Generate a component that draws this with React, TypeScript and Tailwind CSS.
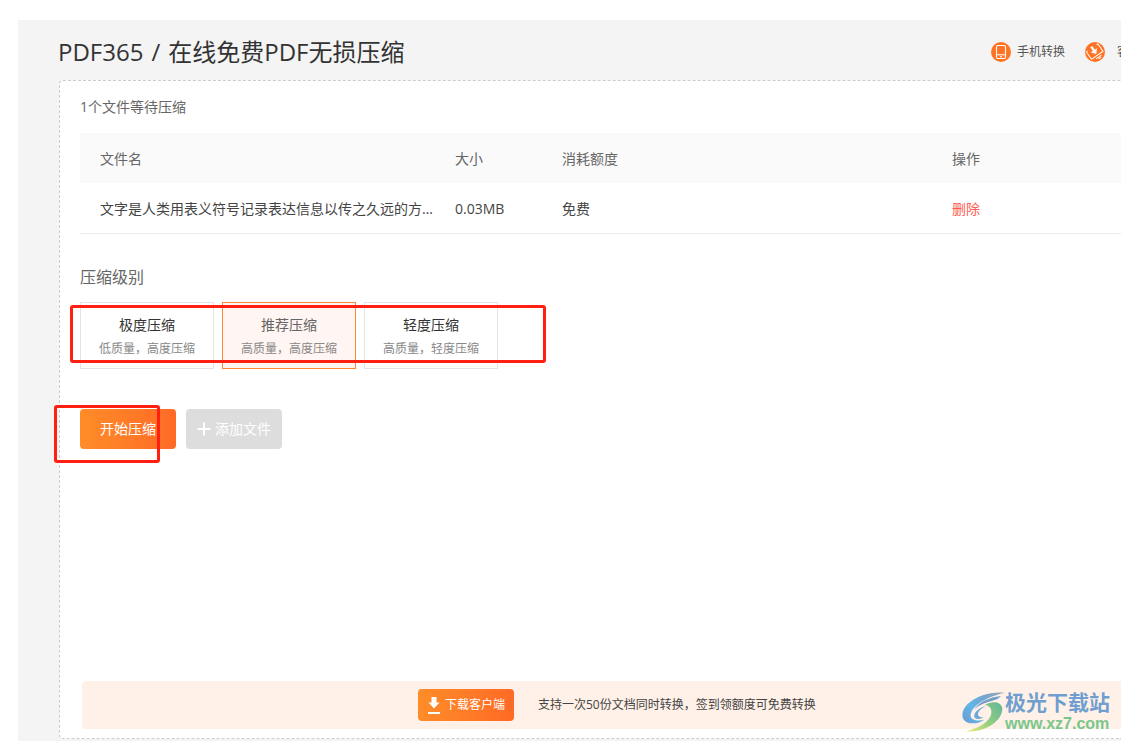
import React from "react";

const levels = [
  { name: "极度压缩", note: "低质量，高度压缩", active: false },
  { name: "推荐压缩", note: "高质量，高度压缩", active: true },
  { name: "轻度压缩", note: "高质量，轻度压缩", active: false },
];

function PhoneIcon() {
  return (
    <svg className="size-5 shrink-0" viewBox="0 0 20 20" fill="none" aria-hidden="true">
      <circle cx="10" cy="10" r="10" fill="#ff7324" />
      <rect x="5.5" y="3.5" width="9" height="13" rx="1.5" stroke="#fff" strokeWidth="1.1" />
      <path d="M5.5 12.8h9M9 14.7h2" stroke="#fff" strokeWidth="1.1" />
    </svg>
  );
}

function ClientIcon() {
  return (
    <svg className="size-5 shrink-0" viewBox="0 0 20 20" fill="none" aria-hidden="true">
      <circle cx="10" cy="10" r="10" fill="#ff7324" />
      <g transform="rotate(-35 10 10)">
        <path d="M4.500 5H3v9h14V5h-1.500M7 16.300h6.500M9 17.800h3" stroke="#fff" strokeWidth="1" />
        <path d="M8.900 3.500h2.200v4.500h2.700L10 12.300 6.200 8h2.700z" fill="#fff" />
      </g>
    </svg>
  );
}

function SwirlLogo() {
  return (
    <svg className="h-10 w-[43px] shrink-0" viewBox="19 19 129 120" fill="none" aria-hidden="true">
      <defs>
        <linearGradient id="swirlBlue" x1="140" y1="20" x2="30" y2="110" gradientUnits="userSpaceOnUse">
          <stop stopColor="#9aa5b1" />
          <stop offset="0.4" stopColor="#6fa8d4" />
          <stop offset="0.7" stopColor="#62b6e6" />
          <stop offset="1" stopColor="#6a9fd6" />
        </linearGradient>
        <linearGradient id="swirlGreen" x1="138" y1="60" x2="35" y2="138" gradientUnits="userSpaceOnUse">
          <stop stopColor="#68b795" />
          <stop offset="0.5" stopColor="#94d080" />
          <stop offset="1" stopColor="#f2e86c" />
        </linearGradient>
      </defs>
      <path
        d="M147 21C108 17 62 29 35 56C14 78 15 106 40 112C56 115 74 111 86 102C66 107 46 104 45 90C45 66 78 38 147 21Z"
        fill="url(#swirlBlue)"
      />
      <path d="M136 31C100 35 70 49 55 72C76 53 95 50 108 46C121 43 131 38 136 31Z" fill="#719fca" />
      <path d="M91 62C70 65 53 82 56 94C60 103 76 101 84 94C75 96 67 93 67 86C67 77 78 67 91 62Z" fill="#6fa9db" />
      <path
        d="M88 57C109 45 137 47 140 68C141 101 96 141 29 137C71 129 106 106 107 80C108 67 100 60 88 57Z"
        fill="url(#swirlGreen)"
      />
    </svg>
  );
}

export default function App() {
  return (
    <div className="min-h-screen overflow-hidden bg-white pt-5 pl-[18px] font-['Open_Sans','Noto_Sans_CJK_SC',sans-serif] text-sm text-[#666]">
      <main className="flex min-h-[calc(100vh-20px)] flex-col bg-[#f4f4f4] pb-0.5 pl-10">
        <header className="flex h-[60px] items-center justify-between overflow-hidden pt-1">
          <h1 className="flex gap-2 text-2xl whitespace-nowrap text-[#333]">
            <span>PDF365</span>
            <span>/</span>
            <span>在线免费PDF无损压缩</span>
          </h1>
          <nav className="-mr-8 flex shrink-0 gap-5 text-xs text-[#555]">
            <a href="#phone" className="flex items-center gap-1.5"><PhoneIcon />手机转换</a>
            <a href="#client" className="flex items-center gap-3"><ClientIcon />客户端</a>
          </nav>
        </header>

        <section className="relative ml-px flex flex-1 flex-col rounded-l border border-r-0 border-dashed border-[#ccc] bg-white pt-4 pb-[9px] pl-5">
          <p className="leading-5">1个文件等待压缩</p>

          <table className="mt-4 w-full table-fixed border-collapse text-left">
            <thead>
              <tr className="h-[50px] bg-[#fafafa]">
                <th className="w-[375px] pt-0.5 pl-5 font-normal">文件名</th>
                <th className="w-[107px] pt-0.5 font-normal">大小</th>
                <th className="w-[390px] pt-0.5 font-normal">消耗额度</th>
                <th className="pt-0.5 font-normal">操作</th>
              </tr>
            </thead>
            <tbody>
              <tr className="h-[50px] border-b border-[#ebebeb] text-[#444]">
                <td className="pt-0.5 pl-5"><span className="block w-[336px] truncate">文字是人类用表义符号记录表达信息以传之久远的方式和工具</span></td>
                <td className="pt-0.5">0.03MB</td>
                <td className="pt-0.5">免费</td>
                <td className="pt-0.5"><button type="button" className="text-[#ff5a4f]">删除</button></td>
              </tr>
            </tbody>
          </table>

          <h2 className="mt-8 text-base leading-[22px]">压缩级别</h2>
          <div className="relative mt-3.5 flex gap-2">
            {levels.map((level) => (
              <button
                key={level.name}
                type="button"
                aria-pressed={level.active}
                className={
                  level.active
                    ? "flex h-[67px] w-[134px] flex-col items-center border border-[#ff8a35] bg-[#fff5f2] pt-3 text-[#666]"
                    : "flex h-[67px] w-[134px] flex-col items-center border border-[#e4e4e4] bg-white pt-3 text-[#333]"
                }
              >
                <span className="leading-5">{level.name}</span>
                <span className="mt-1 text-xs leading-5 text-[#888]">{level.note}</span>
              </button>
            ))}
            <div className="pointer-events-none absolute top-[3px] -left-2.5 h-[58px] w-[476px] rounded-[3px] border-3 border-[#ff2012]" />
          </div>

          <div className="relative mt-10 flex gap-2.5 text-white">
            <button type="button" className="h-10 w-24 rounded bg-linear-to-r from-[#ff8c28] to-[#ff6a26]">开始压缩</button>
            <button type="button" className="flex h-10 w-24 items-center justify-center gap-1 rounded bg-[#ddd]">
              <svg className="size-3.5" viewBox="0 0 14 14" aria-hidden="true">
                <path d="M7 0.5v13M0.5 7h13" stroke="#fff" strokeWidth="2" />
              </svg>
              添加文件
            </button>
            <div className="pointer-events-none absolute -top-1 -left-[26px] h-[58px] w-[106px] rounded-[3px] border-3 border-[#ff2012]" />
          </div>

          <footer className="mt-auto ml-0.5 flex h-12 items-center gap-6 rounded-l bg-[#fff1e8] pl-[336px] text-xs text-[#444]">
            <a href="#download" className="flex h-8 w-24 items-center justify-center gap-1 rounded bg-linear-to-r from-[#ff8c28] to-[#ff6a26] text-white">
              <svg className="h-[18px] w-3.5" viewBox="0 0 14 18" aria-hidden="true">
                <path d="M4.5 1h5v5.500h3L7 12.500 1.500 6.500h3zM1 16h12v2H1z" fill="#fff" />
              </svg>
              下载客户端
            </a>
            <span>支持一次50份文档同时转换，签到领额度可免费转换</span>
          </footer>

          <div className="pointer-events-none absolute right-[11px] bottom-1 flex items-end">
            <div className="pb-0.5"><SwirlLogo /></div>
            <div className="flex flex-col whitespace-nowrap">
              <span className="text-[21px] leading-6 font-bold text-[#709fcf]">极光下载站</span>
              <span className="font-['Liberation_Sans',sans-serif] text-base leading-5 font-bold text-[#79c68a]">www.xz7.com</span>
            </div>
          </div>
        </section>
      </main>
    </div>
  );
}
